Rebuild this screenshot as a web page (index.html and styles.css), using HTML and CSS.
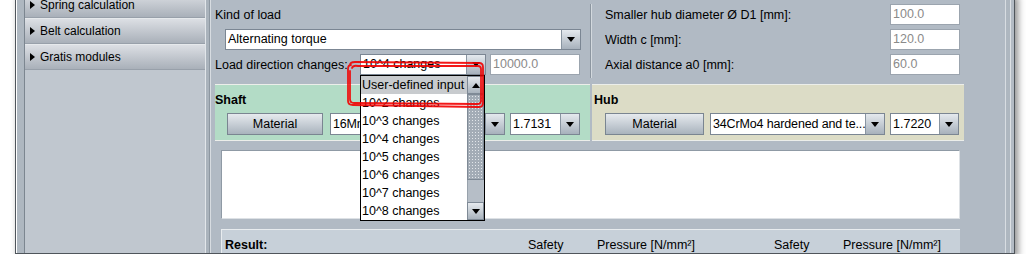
FILE: index.html
```html
<!DOCTYPE html>
<html lang="en">
<head>
    <meta charset="UTF-8">
    <title>Shaft-hub connection</title>
    <link rel="stylesheet" href="styles.css">
</head>
<body>
    <div class="window">
        <div class="frame-left"></div>

        <aside class="sidebar">
            <div class="nav-item">Spring calculation</div>
            <div class="nav-item">Belt calculation</div>
            <div class="nav-item">Gratis modules</div>
        </aside>
        <div class="divider"></div>

        <main class="content">
            <div class="top">
                <div class="group load">
                    <div class="row"><span class="label">Kind of load</span></div>
                    <div class="row">
                        <div class="combo load-kind"><span class="combo-text">Alternating torque</span><span class="combo-arrow"></span></div>
                    </div>
                    <div class="row">
                        <span class="label changes-label">Load direction changes:</span>
                        <div class="combo changes"><span class="combo-text">10^4 changes</span><span class="combo-arrow"></span></div>
                        <div class="field changes-value">10000.0</div>
                    </div>
                </div>
                <div class="group dims">
                    <div class="row"><span class="label">Smaller hub diameter Ø D1 [mm]:</span><div class="field">100.0</div></div>
                    <div class="row"><span class="label">Width c [mm]:</span><div class="field">120.0</div></div>
                    <div class="row"><span class="label">Axial distance a0 [mm]:</span><div class="field">60.0</div></div>
                </div>
            </div>

            <div class="parts">
                <section class="part shaft">
                    <h3>Shaft</h3>
                    <div class="part-row">
                        <button class="button">Material</button>
                        <div class="combo material"><span class="combo-text">16MnCr5 case-hardened</span><span class="combo-arrow"></span></div>
                        <div class="combo number"><span class="combo-text">1.7131</span><span class="combo-arrow"></span></div>
                    </div>
                </section>
                <section class="part hub">
                    <h3>Hub</h3>
                    <div class="part-row">
                        <button class="button">Material</button>
                        <div class="combo material"><span class="combo-text">34CrMo4 hardened and te...</span><span class="combo-arrow"></span></div>
                        <div class="combo number"><span class="combo-text">1.7220</span><span class="combo-arrow"></span></div>
                    </div>
                </section>
            </div>

            <div class="notes"></div>

            <div class="result">
                <div class="result-head">
                    <b>Result:</b>
                    <span>Safety</span>
                    <span>Pressure [N/mm²]</span>
                    <span>Safety</span>
                    <span>Pressure [N/mm²]</span>
                </div>
            </div>
        </main>

        <div class="frame-right"></div>

        <!-- open list of the "Load direction changes" combo -->
        <div class="popup">
            <ul class="popup-list">
                <li class="selected">User-defined input</li>
                <li>10^2 changes</li>
                <li>10^3 changes</li>
                <li>10^4 changes</li>
                <li>10^5 changes</li>
                <li>10^6 changes</li>
                <li>10^7 changes</li>
                <li>10^8 changes</li>
            </ul>
            <div class="scrollbar">
                <span class="scroll-btn up"></span>
                <span class="scroll-thumb"></span>
                <span class="scroll-track"></span>
                <span class="scroll-btn down"></span>
            </div>
        </div>

        <!-- red marker drawn over the screenshot -->
        <svg class="mark" width="150" height="60" viewBox="0 0 150 60">
            <path d="M10 10 Q10 7 15 7 L139 8 Q143 8 143 12 L143 48 Q143 52 139 52 L13 50 Q8 50 8 46 L8 14 Q8 10 11 10" />
            <path d="M12 13 Q13 10 18 11 L138 11 Q141 11 141 14 L141 46 Q141 49 137 49 L14 48 Q10 48 10 44 L10 16" />
        </svg>
    </div>
</body>
</html>
```

FILE: styles.css
```css
* {
    box-sizing: border-box;
}
body {
    margin: 0;
    background: #fff;
    font-family: "Liberation Sans", Arial, sans-serif;
    font-size: 12.5px;
    color: #000;
}
.window {
    position: relative;
    display: flex;
    width: 1000px;
    height: 262px;
    margin: -8px 0 0 15px;
    border: 1px solid #4f555b;
    border-top: 0;
    background: #b1bac4;
    box-shadow: 3px 4px 7px rgba(0,0,0,0.45);
}
.frame-left {
    width: 9px;
    border-left: 1px solid #fff;
    border-right: 1px solid #7c8690;
    background: #aeb7c0;
}
.frame-right {
    width: 9px;
    border-left: 1px solid #d8dde2;
    background: linear-gradient(to right, #aeb7c0 0 4px, #dde1e5 4px 5px, #b3bbc4 5px);
}
.sidebar {
    width: 181px;
    border-right: 1px solid #e2e6ea;
    background: #c0c7cf;
}
.divider {
    width: 4px;
    border-right: 1px solid #8d97a1;
    background: #aab3bc;
}
.nav-item {
    display: flex;
    align-items: center;
    gap: 5px;
    height: 26px;
    padding-left: 5px;
    border-top: 1px solid #e6e9ec;
    border-bottom: 1px solid #98a0aa;
    background: linear-gradient(#dcdfe4, #a9b0b9);
    font-size: 12px;
}
.nav-item::before {
    content: "";
    border-left: 5px solid #000;
    border-top: 4.5px solid transparent;
    border-bottom: 4.5px solid transparent;
}

/* main form */
.content {
    display: flex;
    flex-direction: column;
    width: 795px;
    border-left: 1px solid #d7dce1;
}
.top {
    display: grid;
    grid-template-columns: 379px 374px;
    padding-top: 12px;
}
.group {
    display: grid;
    grid-auto-rows: 21px;
    row-gap: 4px;
}
.group .row {
    display: flex;
    align-items: center;
}
.load {
    padding-left: 4px;
}
.dims {
    padding: 0 4px 3px 14px;
    border-left: 1px solid #8c96a0;
    box-shadow: inset 1px 0 #d3d9de;
}
.dims .label {
    flex: 1;
}
.combo {
    display: flex;
    height: 21px;
    border: 1px solid #7b8693;
    background: #fff;
}
.combo-text {
    flex: 1;
    padding-left: 2px;
    line-height: 19px;
    white-space: nowrap;
    overflow: hidden;
}
.combo-arrow {
    display: flex;
    align-items: center;
    justify-content: center;
    width: 19px;
    border-left: 1px solid #8995a1;
    background: linear-gradient(#e4e9ee, #a7b1bc);
}
.combo-arrow::after {
    content: "";
    border-top: 5px solid #000;
    border-left: 4px solid transparent;
    border-right: 4px solid transparent;
}
.load-kind {
    width: 356px;
    margin-left: 10px;
}
.changes-label {
    width: 145px;
}
.changes {
    width: 126px;
}
.field {
    width: 70px;
    height: 21px;
    padding-left: 2px;
    border: 1px solid #9ba4ae;
    background: #fff;
    color: #8a8a8a;
    line-height: 19px;
}
.changes-value {
    width: 90px;
    margin-left: 4px;
}

/* shaft / hub */
.parts {
    display: flex;
    gap: 2px;
    margin: 6px 0 0 4px;
}
.part {
    height: 57px;
    border-top: 1px solid #eceeea;
    border-bottom: 1px solid #eceeea;
}
.part h3 {
    margin: 0;
    padding-top: 7px;
    font-size: 12.5px;
    line-height: 16px;
}
.shaft {
    width: 375px;
    background: #b3dcc6;
}
.hub {
    width: 372px;
    padding-left: 2px;
    background: #dcdcc6;
}
.part-row {
    display: flex;
    gap: 5px;
    margin-top: 5px;
    padding-left: 12px;
}
.hub .part-row {
    padding-left: 11px;
}
.button {
    width: 96px;
    height: 22px;
    margin-right: 2px;
    border: 1px solid #7a8591;
    background: linear-gradient(#e6eaee, #a9b3bd);
    font-family: inherit;
    font-size: 12.5px;
    color: #000;
}
.hub .button {
    width: 99px;
    margin-right: 1px;
}
.part-row .combo {
    height: 22px;
}
.part-row .combo-text {
    line-height: 20px;
}
.material {
    width: 175px;
}
.material .combo-text {
    letter-spacing: -0.15px;
}
.number {
    width: 70px;
}
.hub .number {
    width: 69px;
}

.notes {
    width: 739px;
    height: 69px;
    margin: 9px 0 0 10px;
    border: 1px solid #8f9aa5;
    border-right-color: #dde1e5;
    border-bottom-color: #dde1e5;
    background: #fff;
}
.result {
    flex: 1;
    width: 739px;
    margin: 10px 0 0 10px;
    padding: 7px 0 0 3px;
    border-top: 1px solid #e8ecef;
    border-left: 1px solid #e8ecef;
    background: #c7d0d9;
}
.result-head {
    display: grid;
    grid-template-columns: 303px 69px 177px 69px auto;
    line-height: 16px;
}

/* open combo list */
.popup {
    position: absolute;
    left: 344px;
    top: 83px;
    display: flex;
    width: 125px;
    height: 146px;
    border: 1px solid #000;
    background: #fff;
}
.popup-list {
    width: 106px;
    margin: 0;
    padding: 0;
    list-style: none;
}
.popup-list li {
    height: 18px;
    padding-left: 1px;
    line-height: 18px;
    white-space: nowrap;
}
.popup-list .selected {
    background: #c8cbce;
}
.scrollbar {
    display: flex;
    flex-direction: column;
    width: 17px;
    background: #b6bec7;
}
.scroll-btn {
    display: flex;
    align-items: center;
    justify-content: center;
    height: 18px;
    border: 1px solid #7f8a96;
    background: linear-gradient(#e6eaee, #a9b3bd);
}
.scroll-btn.up::after {
    content: "";
    border-bottom: 5px solid #000;
    border-left: 4px solid transparent;
    border-right: 4px solid transparent;
}
.scroll-btn.down::after {
    content: "";
    border-top: 5px solid #000;
    border-left: 4px solid transparent;
    border-right: 4px solid transparent;
}
.scroll-thumb {
    height: 86px;
    border: 1px solid #7f8a96;
    background: #a3acb6 radial-gradient(circle, #e2e6ea 0.7px, transparent 1px) 0 0 / 3px 3px;
}
.scroll-track {
    flex: 1;
    border-left: 1px solid #98a2ac;
}

.mark {
    position: absolute;
    left: 324px;
    top: 63px;
    pointer-events: none;
}
.mark path {
    fill: none;
    stroke: #f20000;
    stroke-width: 1.8;
    stroke-linecap: round;
    stroke-linejoin: round;
    opacity: 0.9;
}
```
